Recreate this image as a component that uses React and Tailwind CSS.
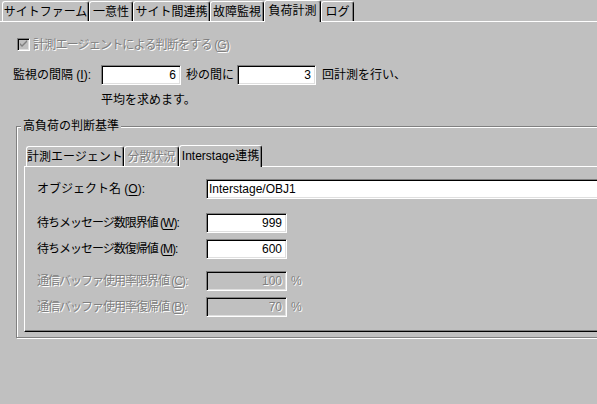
import React from "react";

const DIS = "text-[#808080] [text-shadow:1px_1px_0_#fff]";

function Tab({ label, w, selected, disabled }) {
  const base =
    "flex items-center justify-center border-t border-l border-white border-r border-r-black rounded-t-[3px] shadow-[inset_-1px_0_0_#808080] bg-[#c0c0c0] whitespace-nowrap";
  const size = selected ? "h-[22px] -mb-[1px] relative z-10 pb-[2px]" : "h-[20px] pt-[1px]";
  return (
    <div className={`${base} ${size} ${disabled ? DIS : ""}`} style={{ width: w }}>
      {label}
    </div>
  );
}

function Field({ value, className, disabled, left }) {
  const box =
    "h-[20px] flex items-center border-t border-l border-t-[#808080] border-l-[#808080] border-r border-b border-r-white border-b-white shadow-[inset_1px_1px_0_#000,inset_-1px_-1px_0_#dfdfdf] whitespace-nowrap overflow-hidden tracking-normal";
  const fill = disabled ? `bg-[#c0c0c0] ${DIS}` : "bg-white text-black";
  const align = left ? "justify-start pl-[2px]" : "justify-end pr-[4px]";
  return <div className={`${box} ${fill} ${align} ${className}`}>{value}</div>;
}

function U({ c }) {
  return <span className="underline underline-offset-[2px]">{c}</span>;
}

export default function App() {
  return (
    <div className="w-[597px] h-[404px] overflow-hidden bg-[#c0c0c0] text-[12px] leading-[12px] text-black font-['Liberation_Sans','Noto_Sans_CJK_JP',sans-serif] flex flex-col">
      {/* top tabs */}
      <div className="flex items-end h-[21px] pl-[2px] shrink-0">
        <Tab label="サイトファーム" w={87} />
        <Tab label="一意性" w={44} />
        <Tab label="サイト間連携" w={77} />
        <Tab label="故障監視" w={54} />
        <Tab label="負荷計測" w={57} selected />
        <Tab label="ログ" w={33} />
      </div>

      {/* main panel */}
      <div className="flex-1 border-t border-white flex flex-col">
        {/* checkbox row */}
        <div className="flex items-center mt-[16px] pl-[17px] h-[13px] whitespace-nowrap">
          <div className="w-[13px] h-[13px] border-t border-l border-t-[#808080] border-l-[#808080] border-r border-b border-r-white border-b-white shadow-[inset_1px_1px_0_#000,inset_-1px_-1px_0_#dfdfdf] bg-[#c0c0c0] flex items-center justify-center">
            <svg width="9" height="9" viewBox="0 0 9 9">
              <path d="M1 3 L1 5 L3 7 L8 2 L8 0 L3 5 Z" fill="#808080" />
            </svg>
          </div>
          <span className={`ml-[3px] tracking-[-0.8px] ${DIS}`}>
            計測エージェントによる判断をする (<U c="G" />)
          </span>
        </div>

        {/* interval row */}
        <div className="flex items-center mt-[14px] pl-[13px] h-[20px] whitespace-nowrap">
          <span className="w-[88px]">
            監視の間隔 (<U c="I" />):
          </span>
          <Field value="6" className="w-[80px]" />
          <span className="ml-[5px] w-[51px]">秒の間に</span>
          <Field value="3" className="w-[79px]" />
          <span className="ml-[6px]">回計測を行い、</span>
        </div>
        <div className="mt-[9px] pl-[101px] h-[12px]">平均を求めます。</div>

        {/* group box */}
        <div className="relative mt-[20px] ml-[16px] w-[620px] h-[212px] border border-[#808080] shadow-[inset_1px_1px_0_#fff,1px_1px_0_#fff] pt-[17px] pl-[7px]">
          <span className="absolute left-[4px] -top-[7px] px-[2px] bg-[#c0c0c0]">高負荷の判断基準</span>

          {/* inner tabs */}
          <div className="flex items-end h-[22px] pl-[2px]">
            <Tab label="計測エージェント" w={98} />
            <Tab label="分散状況" w={55} disabled />
            <Tab label="Interstage連携" w={83} selected />
          </div>

          {/* inner panel */}
          <div className="h-[166px] border-t border-l border-white border-b border-b-black shadow-[inset_0_-1px_0_#808080] pl-[12px] flex flex-col whitespace-nowrap">
            <div className="flex items-center mt-[12px]">
              <span className="w-[169px]">
                オブジェクト名 (<U c="O" />):
              </span>
              <Field value="Interstage/OBJ1" className="w-[420px]" left />
            </div>
            <div className="flex items-center mt-[14px]">
              <span className="w-[169px] tracking-[-1px]">
                待ちメッセージ数限界値 (<U c="W" />):
              </span>
              <Field value="999" className="w-[81px]" />
            </div>
            <div className="flex items-center mt-[6px]">
              <span className="w-[169px] tracking-[-1px]">
                待ちメッセージ数復帰値 (<U c="M" />):
              </span>
              <Field value="600" className="w-[81px]" />
            </div>
            <div className="flex items-center mt-[12px]">
              <span className={`w-[169px] tracking-[-1px] ${DIS}`}>
                通信バッファ使用率限界値 (<U c="C" />):
              </span>
              <Field value="100" className="w-[81px]" disabled />
              <span className={`ml-[4px] ${DIS}`}>%</span>
            </div>
            <div className="flex items-center mt-[6px]">
              <span className={`w-[169px] tracking-[-1px] ${DIS}`}>
                通信バッファ使用率復帰値 (<U c="B" />):
              </span>
              <Field value="70" className="w-[81px]" disabled />
              <span className={`ml-[4px] ${DIS}`}>%</span>
            </div>
          </div>
        </div>
      </div>
    </div>
  );
}
